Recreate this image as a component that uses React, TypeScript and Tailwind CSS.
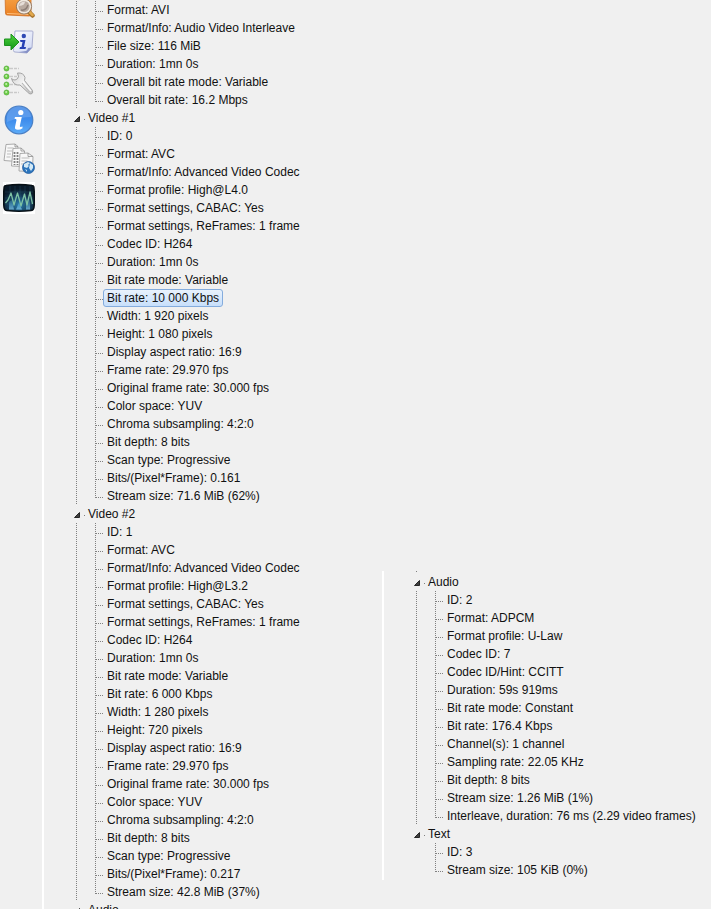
import { useState } from "react";

type Group = {
  title?: string;
  items: string[];
};

const mainGroups: Group[] = [
  {
    items: [
      "Format: AVI",
      "Format/Info: Audio Video Interleave",
      "File size: 116 MiB",
      "Duration: 1mn 0s",
      "Overall bit rate mode: Variable",
      "Overall bit rate: 16.2 Mbps",
    ],
  },
  {
    title: "Video #1",
    items: [
      "ID: 0",
      "Format: AVC",
      "Format/Info: Advanced Video Codec",
      "Format profile: High@L4.0",
      "Format settings, CABAC: Yes",
      "Format settings, ReFrames: 1 frame",
      "Codec ID: H264",
      "Duration: 1mn 0s",
      "Bit rate mode: Variable",
      "Bit rate: 10 000 Kbps",
      "Width: 1 920 pixels",
      "Height: 1 080 pixels",
      "Display aspect ratio: 16:9",
      "Frame rate: 29.970 fps",
      "Original frame rate: 30.000 fps",
      "Color space: YUV",
      "Chroma subsampling: 4:2:0",
      "Bit depth: 8 bits",
      "Scan type: Progressive",
      "Bits/(Pixel*Frame): 0.161",
      "Stream size: 71.6 MiB (62%)",
    ],
  },
  {
    title: "Video #2",
    items: [
      "ID: 1",
      "Format: AVC",
      "Format/Info: Advanced Video Codec",
      "Format profile: High@L3.2",
      "Format settings, CABAC: Yes",
      "Format settings, ReFrames: 1 frame",
      "Codec ID: H264",
      "Duration: 1mn 0s",
      "Bit rate mode: Variable",
      "Bit rate: 6 000 Kbps",
      "Width: 1 280 pixels",
      "Height: 720 pixels",
      "Display aspect ratio: 16:9",
      "Frame rate: 29.970 fps",
      "Original frame rate: 30.000 fps",
      "Color space: YUV",
      "Chroma subsampling: 4:2:0",
      "Bit depth: 8 bits",
      "Scan type: Progressive",
      "Bits/(Pixel*Frame): 0.217",
      "Stream size: 42.8 MiB (37%)",
    ],
  },
  { title: "Audio", items: [] },
];

const sideGroups: Group[] = [
  {
    title: "Audio",
    items: [
      "ID: 2",
      "Format: ADPCM",
      "Format profile: U-Law",
      "Codec ID: 7",
      "Codec ID/Hint: CCITT",
      "Duration: 59s 919ms",
      "Bit rate mode: Constant",
      "Bit rate: 176.4 Kbps",
      "Channel(s): 1 channel",
      "Sampling rate: 22.05 KHz",
      "Bit depth: 8 bits",
      "Stream size: 1.26 MiB (1%)",
      "Interleave, duration: 76 ms (2.29 video frames)",
    ],
  },
  {
    title: "Text",
    items: ["ID: 3", "Stream size: 105 KiB (0%)"],
  },
];

const dotsDown = "w-px shrink-0 bg-[repeating-linear-gradient(to_bottom,#808080_0px,#808080_1px,transparent_1px,transparent_2px)]";
const dotsAcross = "h-px shrink-0 bg-[repeating-linear-gradient(to_right,#808080_0px,#808080_1px,transparent_1px,transparent_2px)]";

const FolderIcon = () => (
  <svg viewBox="0 0 32 32" className="size-8" aria-hidden="true">
    <defs>
      <linearGradient id="folder" x1="0" y1="0" x2="0" y2="1">
        <stop offset="0" stopColor="#f9a94a" />
        <stop offset="1" stopColor="#ea7f22" />
      </linearGradient>
    </defs>
    <path d="M2 5h10l3 3h13v19q0 2-2 2L4 28q-1.500 0-1.500-2z" fill="url(#folder)" stroke="#cf6f22" strokeWidth="0.800" />
    <path d="M4 26.500 26 27.500" stroke="#ffc07c" />
    <path d="m26 25 3.500 3.500" stroke="#a5702a" strokeWidth="4.500" strokeLinecap="round" />
    <path d="m26.500 25 3 3" stroke="#e2a94c" strokeWidth="2.500" strokeLinecap="round" />
    <circle cx="21" cy="19.500" r="6.500" fill="#b9aaa0" stroke="#f0e9e0" strokeWidth="1.800" />
    <circle cx="21" cy="19.500" r="7.600" fill="none" stroke="#8a7462" strokeWidth="0.900" />
    <path d="M16 19q1-4.500 6-4.500 0 4-6 4.500" fill="#e6ded8" />
    <path d="M18 23q5 1 7-5" stroke="#8b7d75" fill="none" strokeWidth="1.500" />
  </svg>
);

const ExportInfoIcon = () => (
  <svg viewBox="0 0 32 32" className="size-8" aria-hidden="true">
    <defs>
      <linearGradient id="sheet" x1="0" y1="0" x2="1" y2="1">
        <stop offset="0" stopColor="#ffffff" />
        <stop offset="1" stopColor="#cdd6f3" />
      </linearGradient>
      <linearGradient id="arrow" x1="0" y1="0" x2="0" y2="1">
        <stop offset="0" stopColor="#4fd43c" />
        <stop offset="1" stopColor="#12951a" />
      </linearGradient>
    </defs>
    <path d="M12 5h17q1 0 1 1l-1 15.500-5 5.500-12-1q-1.500 0-1.500-1.500z" fill="url(#sheet)" stroke="#a9aed0" />
    <path d="m29 21.500-5 5.500-8-1 7-1q1.500-.500 2-3z" fill="#8490c6" />
    <circle cx="20.800" cy="10" r="2.200" fill="#2f49b4" />
    <path d="M17 14h5.500l-1.500 7h2l-.5 2h-6l.5-2h1.500l1-5h-2z" fill="#2741b5" />
    <path d="M1.500 13H8V8l8 8-8 8v-4.500H1.500z" fill="url(#arrow)" stroke="#1d921f" strokeLinejoin="round" />
  </svg>
);

const OptionsIcon = () => (
  <svg viewBox="0 0 32 32" className="size-8" aria-hidden="true">
    <defs>
      <linearGradient id="wrench" x1="0" y1="0" x2="1" y2="0.800">
        <stop offset="0" stopColor="#d2d2d2" />
        <stop offset="0.500" stopColor="#f0f0f0" />
        <stop offset="1" stopColor="#c4c4c4" />
      </linearGradient>
    </defs>
    {[3.5, 11.5, 19.5, 27.5].map((y) => (
      <g key={y}>
        <path d={`M7 ${y}h9`} stroke="#c9c9c9" strokeWidth="1.500" strokeDasharray="3 1" />
        <circle cx="3.500" cy={y} r="2.500" fill="#6fd049" stroke="#56ac3b" strokeWidth="0.800" />
        <circle cx="3.200" cy={y - 0.6} r="1" fill="#c8f2b2" />
      </g>
    ))}
    <path
      d="M8.500 13.500q1.500 1.500 3.500 1.500 3-.500 3.500-3.500L14.500 8q6-.500 7.500 4.500l-.500 3 8 10q1 3-1.500 3.500-2 0-3.500-2L17 20q-6.500 1-8.500-6.500z"
      fill="url(#wrench)"
      stroke="#a3a3a3"
      strokeLinejoin="round"
    />
    <path d="m19 18 7.500 9" stroke="#b4b4b4" />
    <path d="m20 16.500 8 9.500" stroke="#fafafa" strokeWidth="1.500" />
  </svg>
);

const InfoIcon = () => (
  <svg viewBox="0 0 32 32" className="size-8" aria-hidden="true">
    <defs>
      <linearGradient id="ball" x1="0" y1="0" x2="0" y2="1">
        <stop offset="0" stopColor="#3f82df" />
        <stop offset="0.500" stopColor="#3f8dec" />
        <stop offset="1" stopColor="#5dacf8" />
      </linearGradient>
    </defs>
    <circle cx="16" cy="16" r="13.800" fill="url(#ball)" stroke="#4a7fc4" strokeWidth="1.200" />
    <path d="M4 14a12 11 0 0 1 24-1q-11 0-24 5z" fill="#78aef2" opacity="0.500" />
    <circle cx="17.800" cy="8.500" r="2.600" fill="#fff" />
    <path d="M12 13h6.800l-2 9q0 1.500 2.700.5v1.800q-2 1.500-4.700 1.500-3.300 0-2.800-2.800l1.500-7q0-1.200-2-1.200z" fill="#fff" />
  </svg>
);

const WebFilesIcon = () => (
  <svg viewBox="0 0 32 32" className="size-8" aria-hidden="true">
    <g fill="#f8f8f8" stroke="#a2a2a2" strokeWidth="0.900" strokeLinejoin="round">
      <path d="m3 1.500 9-.5 3 2.500-1 15-13-1z" />
      <path d="m10 5.500 8-.5 3.500 3L21 23.500 8.500 23z" />
      <path d="m17 10.500 8-.5 5 3.500-.5 15-13.500-.5z" />
    </g>
    <path d="m12 1 0 3 3-.5M18 5v3h3.500M25 10v3.500h5" fill="none" stroke="#8e8e8e" strokeWidth="0.800" />
    <path d="M4.500 5h6M4 8h5M4 11h4M3.500 14h4M18.500 15h8M18.500 18h6M18 21h3" stroke="#bdbdbd" />
    <path d="M11.500 9v13M14.500 9v13" stroke="#808080" strokeWidth="1.800" strokeDasharray="2 1" />
    <circle cx="25.500" cy="24.500" r="6" fill="#2b74bd" stroke="#2a619f" strokeWidth="0.800" />
    <path d="m21 21 4-2 2 1-2 2 1 1-2 2-3-1zM27 20l3 2v3l-2 3-2-3zM22 26l2 1v2z" fill="#d3e9f5" />
  </svg>
);

const WaveIcon = () => (
  <svg viewBox="0 0 32 32" className="size-8" aria-hidden="true">
    <defs>
      <radialGradient id="scope" cx="0.500" cy="0.750" r="0.600">
        <stop offset="0" stopColor="#2a7fae" />
        <stop offset="0.550" stopColor="#153f5e" />
        <stop offset="1" stopColor="#0a1a29" />
      </radialGradient>
      <linearGradient id="glow" x1="0" y1="0" x2="0" y2="1">
        <stop offset="0" stopColor="#3fa0d0" stopOpacity="0.200" />
        <stop offset="1" stopColor="#8ad4f6" />
      </linearGradient>
    </defs>
    <path d="M0 0h32v32H0z" fill="#fff" />
    <path d="M3 3.500Q16 1.500 29 3.500q2 0 2 3 1 10 0 19-.5 3-3 3-12 1.500-24 0-2.500 0-3-3-1-9 0-19 0-3 2-3z" fill="url(#scope)" stroke="#071016" strokeWidth="1.500" />
    <path d="M7 4v24M12 4v24M17 4v24M22 4v24M27 4v24M2 10h28M2 16h28M2 22h28" stroke="#397184" strokeWidth="0.500" opacity="0.500" />
    <path d="M6 27.500V20l3-2 2 9.500M13 27.500l3-7 3 7M23 27.500V18l4-2v11.500" fill="url(#glow)" opacity="0.700" />
    <path d="m2.500 21 2.500-3 3-7 3 12 3.500-12L18 24l3.500-12 2.500 11 3-13 2.500 12" fill="none" stroke="#7ec3a5" strokeWidth="1.300" strokeLinejoin="round" />
  </svg>
);

const tools = [
  { label: "Open file", Icon: FolderIcon },
  { label: "Export", Icon: ExportInfoIcon },
  { label: "Options", Icon: OptionsIcon },
  { label: "About", Icon: InfoIcon },
  { label: "Online files", Icon: WebFilesIcon },
  { label: "Waveform", Icon: WaveIcon },
];

type TreeProps = {
  groups: Group[];
  label: string;
  selected: string;
  onSelect: (id: string) => void;
};

const Tree = ({ groups, label, selected, onSelect }: TreeProps) => (
  <ul role="tree" aria-label={label}>
    {groups.map((group, g) => (
      <li key={g} role="treeitem" aria-expanded="true">
        {group.title && (
          <div className="flex h-[18px] items-center">
            <svg viewBox="0 0 6 6" className="mt-0.5 size-1.5" aria-hidden="true">
              <path d="M5.500 0.500v5h-5z" fill="#404040" stroke="#262626" />
            </svg>
            <span className="mt-0.5 ml-1 size-px bg-[#808080]" />
            <span className="ml-[3px]">{group.title}</span>
          </div>
        )}
        <div className="flex pl-0.5">
          <span className={g < groups.length - 1 ? dotsDown : "w-px shrink-0"} />
          <ul role="group" className="ml-[18px]">
            {group.items.map((item, i) => {
              const id = `${label}-${g}-${i}`;
              const isLast = i === group.items.length - 1;
              return (
                <li key={id} role="treeitem" aria-selected={selected === id} className="flex h-[18px]">
                  <span className={`${dotsDown} ${isLast ? "h-[11px]" : "h-full"}`} />
                  <span className={`${dotsAcross} mt-2.5 w-[7px]`} />
                  <button
                    type="button"
                    onClick={() => onSelect(id)}
                    className={`flex items-center rounded-[3px] border px-[3px] ${
                      selected === id
                        ? "border-[#84acdd] bg-linear-to-b from-[#e9f2fc] to-[#c7dffb]"
                        : "border-transparent"
                    }`}
                  >
                    {item}
                  </button>
                </li>
              );
            })}
          </ul>
        </div>
      </li>
    ))}
  </ul>
);

const App = () => {
  const [selected, setSelected] = useState("General-1-9");

  return (
    <div className="flex h-screen overflow-hidden bg-[#f0f0f0] font-['Liberation_Sans',Arial,sans-serif] text-[12px] leading-4 whitespace-nowrap text-[#111]">
      <nav aria-label="Tools" className="-mt-[13px] flex w-[42px] shrink-0 flex-col gap-[7px] pl-[3px]">
        {tools.map(({ label, Icon }) => (
          <button key={label} type="button" aria-label={label} className="size-8">
            <Icon />
          </button>
        ))}
      </nav>

      <main className="min-w-0 flex-1 overflow-hidden border-l-2 border-white pt-px pl-[30px]">
        <Tree groups={mainGroups} label="General" selected={selected} onSelect={setSelected} />
      </main>

      {/* Remaining streams */}
      <aside className="mb-[29px] w-[329px] shrink-0 self-end border-l-2 border-white pb-px pl-[30px]">
        <div className="flex h-0.5 pl-0.5">
          <span className={dotsDown} />
        </div>
        <Tree groups={sideGroups} label="Streams" selected={selected} onSelect={setSelected} />
      </aside>
    </div>
  );
};

export default App;
